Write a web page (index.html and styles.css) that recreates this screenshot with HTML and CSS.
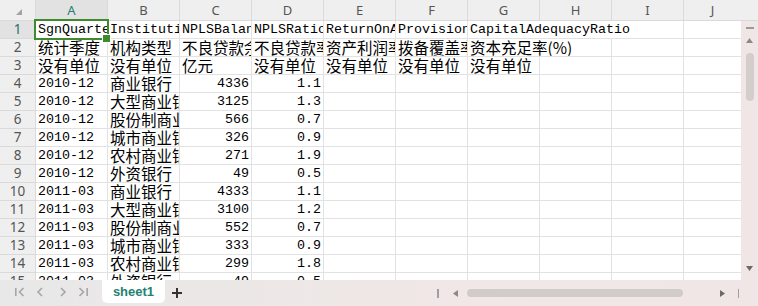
FILE: index.html
```html
<!DOCTYPE html>
<html>
<head>
<meta charset="utf-8">
<link rel="stylesheet" href="styles.css">
</head>
<body>
<div class="app">
  <div class="sheet">
    <div class="corner"><svg width="35" height="20" viewBox="0 0 35 20"><polygon points="22,9 22,15 16,15" fill="#a3a3a3"/></svg></div>
    <div class="ch act">A</div><div class="ch">B</div><div class="ch">C</div><div class="ch">D</div><div class="ch">E</div><div class="ch">F</div><div class="ch">G</div><div class="ch">H</div><div class="ch">I</div><div class="ch last">J</div><div class="ch end"></div>

    <div class="rh act">1</div>
    <div class="c">SgnQuarter</div><div class="c">InstitutionType</div><div class="c">NPLSBalance</div><div class="c">NPLSRatio</div><div class="c">ReturnOnAssets</div><div class="c">ProvisionCoverage</div><div class="c s3">CapitalAdequacyRatio</div><div class="c last"></div>
    <div class="vscroll">
      <div class="vdash"></div>
      <svg class="varrow up" width="7" height="5" viewBox="0 0 7 5"><polygon points="3.5,0 7,5 0,5" fill="#8a8a8a"/></svg>
      <div class="vthumb"></div>
      <div class="vspace"></div>
      <svg class="varrow down" width="7" height="5" viewBox="0 0 7 5"><polygon points="0,0 7,0 3.5,5" fill="#6a6a6a"/></svg>
    </div>

    <div class="rh">2</div>
    <div class="c z">统计季度</div><div class="c z">机构类型</div><div class="c z">不良贷款余额</div><div class="c z">不良贷款率</div><div class="c z">资产利润率</div><div class="c z">拨备覆盖率</div><div class="c z s2">资本充足率(%)</div><div class="c"></div><div class="c last"></div>

    <div class="rh">3</div>
    <div class="c z">没有单位</div><div class="c z">没有单位</div><div class="c z">亿元</div><div class="c z">没有单位</div><div class="c z">没有单位</div><div class="c z">没有单位</div><div class="c z">没有单位</div><div class="c"></div><div class="c"></div><div class="c last"></div>

    <div class="rh">4</div>
    <div class="c">2010-12</div><div class="c z">商业银行</div><div class="c n">4336</div><div class="c n">1.1</div><div class="c"></div><div class="c"></div><div class="c"></div><div class="c"></div><div class="c"></div><div class="c last"></div>

    <div class="rh">5</div>
    <div class="c">2010-12</div><div class="c z">大型商业银行</div><div class="c n">3125</div><div class="c n">1.3</div><div class="c"></div><div class="c"></div><div class="c"></div><div class="c"></div><div class="c"></div><div class="c last"></div>

    <div class="rh">6</div>
    <div class="c">2010-12</div><div class="c z">股份制商业银行</div><div class="c n">566</div><div class="c n">0.7</div><div class="c"></div><div class="c"></div><div class="c"></div><div class="c"></div><div class="c"></div><div class="c last"></div>

    <div class="rh">7</div>
    <div class="c">2010-12</div><div class="c z">城市商业银行</div><div class="c n">326</div><div class="c n">0.9</div><div class="c"></div><div class="c"></div><div class="c"></div><div class="c"></div><div class="c"></div><div class="c last"></div>

    <div class="rh">8</div>
    <div class="c">2010-12</div><div class="c z">农村商业银行</div><div class="c n">271</div><div class="c n">1.9</div><div class="c"></div><div class="c"></div><div class="c"></div><div class="c"></div><div class="c"></div><div class="c last"></div>

    <div class="rh">9</div>
    <div class="c">2010-12</div><div class="c z">外资银行</div><div class="c n">49</div><div class="c n">0.5</div><div class="c"></div><div class="c"></div><div class="c"></div><div class="c"></div><div class="c"></div><div class="c last"></div>

    <div class="rh">10</div>
    <div class="c">2011-03</div><div class="c z">商业银行</div><div class="c n">4333</div><div class="c n">1.1</div><div class="c"></div><div class="c"></div><div class="c"></div><div class="c"></div><div class="c"></div><div class="c last"></div>

    <div class="rh">11</div>
    <div class="c">2011-03</div><div class="c z">大型商业银行</div><div class="c n">3100</div><div class="c n">1.2</div><div class="c"></div><div class="c"></div><div class="c"></div><div class="c"></div><div class="c"></div><div class="c last"></div>

    <div class="rh">12</div>
    <div class="c">2011-03</div><div class="c z">股份制商业银行</div><div class="c n">552</div><div class="c n">0.7</div><div class="c"></div><div class="c"></div><div class="c"></div><div class="c"></div><div class="c"></div><div class="c last"></div>

    <div class="rh">13</div>
    <div class="c">2011-03</div><div class="c z">城市商业银行</div><div class="c n">333</div><div class="c n">0.9</div><div class="c"></div><div class="c"></div><div class="c"></div><div class="c"></div><div class="c"></div><div class="c last"></div>

    <div class="rh">14</div>
    <div class="c">2011-03</div><div class="c z">农村商业银行</div><div class="c n">299</div><div class="c n">1.8</div><div class="c"></div><div class="c"></div><div class="c"></div><div class="c"></div><div class="c"></div><div class="c last"></div>

    <div class="rh cut">15</div>
    <div class="c cut">2011-03</div><div class="c z cut">外资银行</div><div class="c n cut">49</div><div class="c n cut">0.5</div><div class="c cut"></div><div class="c cut"></div><div class="c cut"></div><div class="c cut"></div><div class="c cut"></div><div class="c last cut"></div>

    <div class="sel"></div>
  </div>

  <div class="bar">
    <svg class="nav" width="96" height="26" viewBox="0 0 96 26">
      <g fill="none" stroke="#a6a6a6" stroke-width="1.6">
        <path d="M15.8 8v8M23.5 8l-4 4 4 4"/>
        <path d="M42 8l-4 4 4 4"/>
        <path d="M61 8l4 4-4 4"/>
        <path d="M79.5 8l4 4-4 4M87.2 8v8"/>
      </g>
    </svg>
    <div class="tab">sheet1</div>
    <svg class="plus" width="10" height="10" viewBox="0 0 10 10"><path d="M5 0v10M0 5h10" stroke="#333" stroke-width="2"/></svg>
    <div class="hspace"></div>
    <div class="hscroll">
      <div class="hbar"></div>
      <svg class="harrow l" width="5" height="7" viewBox="0 0 5 7"><polygon points="5,0 5,7 0,3.5" fill="#8a8a8a"/></svg>
      <div class="hthumb"></div>
      <svg class="harrow r" width="5" height="7" viewBox="0 0 5 7"><polygon points="0,0 5,3.5 0,7" fill="#6a6a6a"/></svg>
      <div class="hbar end"></div>
    </div>
  </div>
</div>
</body>
</html>
```

FILE: styles.css
```css
* { box-sizing: border-box; }
html, body { margin: 0; padding: 0; background: #fff; }
.app { width: 758px; height: 306px; display: flex; flex-direction: column; overflow: hidden; }

.sheet {
  position: relative;
  display: grid;
  grid-template-columns: 36px repeat(9, 72px) 57px 17px;
  grid-template-rows: 21px repeat(14, 18px) 7px;
  height: 280px;
  overflow: hidden;
  background: #fff;
}

.corner { background: #efefef; border-right: 1px solid #dadada; border-bottom: 1px solid #dadada; }
.corner svg { display: block; }

.ch {
  background: #efefef;
  border-right: 1px solid #dadada;
  border-bottom: 1px solid #dadada;
  text-align: center;
  font: 13px/20px "Noto Sans", "DejaVu Sans", sans-serif;
  color: #555;
}
.ch.last { border-right: none; }
.ch.end { border-right: none; }
.ch.act { background: #e2e2e2; color: #25807a; }

.rh {
  background: #efefef;
  border-right: 1px solid #dadada;
  border-bottom: 1px solid #dadada;
  text-align: center;
  font: 13.5px/17px "Noto Sans", "DejaVu Sans", sans-serif;
  color: #555;
}
.rh.act { background: #e2e2e2; color: #2a6f6a; }

.c {
  border-right: 1px solid #e2e2e2;
  border-bottom: 1px solid #e2e2e2;
  padding: 1px 2px 0 2px;
  white-space: nowrap;
  overflow: hidden;
  font-family: "Liberation Mono", monospace;
  font-size: 13.33px;
  line-height: 16px;
  color: #000;
}
.c.z { font-family: "Noto Sans CJK SC", sans-serif; font-size: 15.5px; padding-top: 0; line-height: 17px; }
.c.n { text-align: right; padding-right: 2px; }
.c.last { border-right: none; }
.c.s3 { grid-column: span 3; }
.c.s2 { grid-column: span 2; }
.cut { border-bottom: none; }

.vscroll {
  grid-column: 12;
  grid-row: 2 / 17;
  background: #efe6e5;
  display: flex;
  flex-direction: column;
  align-items: center;
  padding-top: 6px;
  padding-bottom: 9px;
}
.vdash { width: 8px; height: 1.5px; background: #9a9a9a; }
.varrow { display: block; margin-top: 9px; }
.vthumb { width: 8px; height: 48px; border-radius: 4px; background: #d3cecc; margin-top: 10px; }
.vspace { flex: 1; }
.varrow.down { margin-top: 0; }

.sel {
  position: absolute;
  left: 34px;
  top: 19px;
  width: 75px;
  height: 21px;
  border: 2px solid #3f8a2c;
}
.sel::after {
  content: "";
  position: absolute;
  right: -4px;
  bottom: -5px;
  width: 7px;
  height: 7px;
  background: #3f8a2c;
  border: 1px solid #fff;
}

.bar {
  height: 26px;
  display: flex;
  align-items: center;
  background: linear-gradient(to right, #e8e8e8, #f0e7e6 60%, #efe6e5);
  padding-right: 19px;
}
.nav { display: block; flex: none; }
.tab {
  align-self: flex-start;
  margin-left: 6px;
  width: 63px;
  height: 23px;
  background: #fff;
  border-radius: 0 0 5px 5px;
  text-align: center;
  font: bold 13px/23px "Liberation Sans", "Noto Sans", sans-serif;
  color: #1e8274;
}
.plus { display: block; margin-left: 7px; flex: none; }
.hspace { flex: 1; }
.hscroll { display: flex; align-items: center; }
.hbar { width: 1.5px; height: 9px; background: #a0a0a0; }
.harrow { display: block; }
.harrow.l { margin-left: 14px; }
.hthumb { width: 216px; height: 8px; border-radius: 4px; background: #d1ccca; margin-left: 9px; }
.harrow.r { margin-left: 37px; }
.hbar.end { margin-left: 13px; }
```
